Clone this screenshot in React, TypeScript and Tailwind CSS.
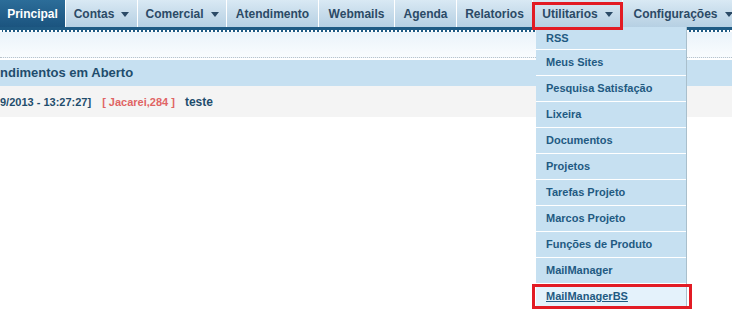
import React from 'react'

const navItems = [
  { label: 'Principal', w: 'w-[66px]', active: true },
  { label: 'Contas', w: 'w-[72px]', arrow: true },
  { label: 'Comercial', w: 'w-[89px]', arrow: true },
  { label: 'Atendimento', w: 'w-[92px]' },
  { label: 'Webmails', w: 'w-[76px]' },
  { label: 'Agenda', w: 'w-[62px]' },
  { label: 'Relatorios', w: 'w-[76px]' },
  { label: 'Utilitarios', w: 'w-[90px]', arrow: true },
  { label: 'Configurações', w: 'w-[120px]', arrow: true, last: true },
]

const menu = [
  'RSS',
  'Meus Sites',
  'Pesquisa Satisfação',
  'Lixeira',
  'Documentos',
  'Projetos',
  'Tarefas Projeto',
  'Marcos Projeto',
  'Funções de Produto',
  'MailManager',
]

function Arrow() {
  return (
    <svg width="8" height="5" viewBox="0 0 8 5" className="ml-[7px] mt-[1px]">
      <path d="M0 0 L8 0 L4 5 Z" fill="#2b4a66" />
    </svg>
  )
}

export default function App() {
  return (
    <div className="relative h-[312px] w-[732px] overflow-hidden bg-white font-['Liberation_Sans',Arial,sans-serif]">
      {/* top nav */}
      <nav className="flex h-[27px] bg-gradient-to-b from-[#d9e9f4] via-[#c7dceb] to-[#b6d0e3]">
        {navItems.map((n) => (
          <div
            key={n.label}
            className={`flex shrink-0 items-center justify-center ${n.w} ${
              n.last ? '' : 'border-r border-white'
            } ${
              n.active
                ? 'bg-gradient-to-b from-[#2c6d99] to-[#1b547f] text-white'
                : 'text-[#2b4a66]'
            } text-[12px] font-bold`}
          >
            {n.label}
            {n.arrow && <Arrow />}
          </div>
        ))}
      </nav>
      <div className="h-[5px] border-b-2 border-dotted border-white bg-[#1f5b84]" />
      <div className="h-[26px] border-b border-dotted border-[#b9c3cb] bg-gradient-to-b from-[#eaf3fa] to-[#f9fcfe]" />

      {/* content */}
      <div className="mt-[2px] flex h-[26px] items-center bg-[#c6e0f1] text-[13px] font-bold text-[#1f4d6d]">
        ndimentos em Aberto
      </div>
      <div className="flex h-[31px] items-center bg-[#f4f4f4] pt-[1px] text-[11px] font-bold text-[#1f4d6d]">
        <span>9/2013 - 13:27:27]</span>
        <span className="ml-[11px] text-[#e06464]">[ Jacarei,284 ]</span>
        <span className="ml-[10px] text-[12px]">teste</span>
      </div>

      {/* dropdown */}
      <div className="absolute left-[536px] top-[27px] w-[151px] border-r border-[#a9bfcc] bg-[#c6e0f1]">
        {menu.map((m, i) => (
          <div
            key={m}
            className={`flex ${
              i === 0 ? 'h-[23px]' : 'h-[26px]'
            } items-center border-b border-white pl-[10px] text-[11px] font-bold text-[#1f5a82]`}
          >
            {m}
          </div>
        ))}
        <div className="flex h-[24px] items-center bg-[#e4f2fb] pl-[10px] text-[11px] font-bold text-[#1f5a82] underline">
          MailManagerBS
        </div>
      </div>

      {/* highlight boxes */}
      <div className="absolute left-[532px] top-[2px] h-[28px] w-[91px] border-[3px] border-[#e21b24]" />
      <div className="absolute left-[532px] top-[284px] h-[25px] w-[160px] border-[3px] border-[#e21b24]" />
    </div>
  )
}
